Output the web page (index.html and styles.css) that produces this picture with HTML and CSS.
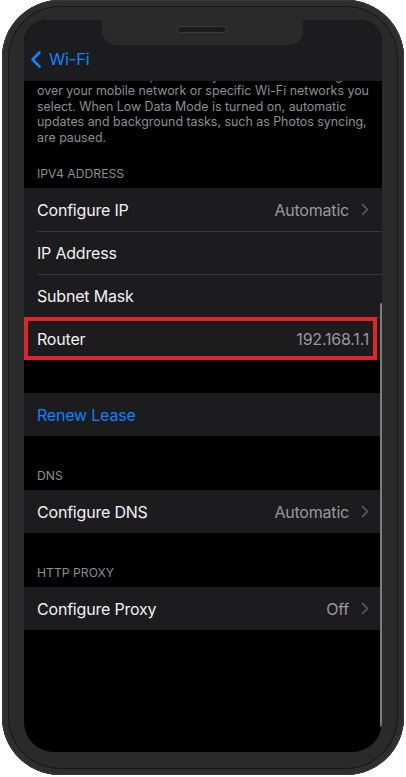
FILE: index.html
```html
<!DOCTYPE html>
<html lang="en">
<head>
  <meta charset="UTF-8" />
  <meta name="viewport" content="width=device-width, initial-scale=1.0" />
  <title>Wi-Fi Details</title>
  <link rel="stylesheet" href="styles.css">
</head>
<body>
  <div class="phone">
    <div class="screen">
      <div class="notch"><span class="speaker"></span></div>

      <!-- Navigation bar -->
      <header class="nav">
        <a class="back" href="#">
          <svg class="back-icon" width="12" height="17" viewBox="0 0 12 17"><path d="M9.5 1.5 L2.5 8.5 L9.5 15.5" /></svg>
          <span>Wi-Fi</span>
        </a>
      </header>

      <main class="content">
        <p class="footnote">Low Data Mode helps reduce your iPhone data usage<br>over your mobile network or specific Wi-Fi networks you<br>select. When Low Data Mode is turned on, automatic<br>updates and background tasks, such as Photos syncing,<br>are paused.</p>

        <h3 class="section-title">IPv4 Address</h3>
        <ul class="group">
          <li class="row">
            <div class="cell">
              <span class="label">Configure IP</span>
              <span class="value">Automatic</span>
              <svg class="chevron" width="8" height="13" viewBox="0 0 8 13"><path d="M1.5 1.5 L6.5 6.5 L1.5 11.5" /></svg>
            </div>
          </li>
          <li class="row">
            <div class="cell"><span class="label">IP Address</span></div>
          </li>
          <li class="row">
            <div class="cell"><span class="label">Subnet Mask</span></div>
          </li>
          <li class="row row-marked">
            <div class="cell">
              <span class="label">Router</span>
              <span class="value">192.168.1.1</span>
            </div>
          </li>
        </ul>

        <ul class="group group-spaced">
          <li class="row">
            <div class="cell"><span class="action">Renew Lease</span></div>
          </li>
        </ul>

        <h3 class="section-title section-spaced">DNS</h3>
        <ul class="group">
          <li class="row">
            <div class="cell">
              <span class="label">Configure DNS</span>
              <span class="value">Automatic</span>
              <svg class="chevron" width="8" height="13" viewBox="0 0 8 13"><path d="M1.5 1.5 L6.5 6.5 L1.5 11.5" /></svg>
            </div>
          </li>
        </ul>

        <h3 class="section-title section-spaced">HTTP Proxy</h3>
        <ul class="group">
          <li class="row">
            <div class="cell">
              <span class="label">Configure Proxy</span>
              <span class="value">Off</span>
              <svg class="chevron" width="8" height="13" viewBox="0 0 8 13"><path d="M1.5 1.5 L6.5 6.5 L1.5 11.5" /></svg>
            </div>
          </li>
        </ul>
      </main>

      <div class="scrollbar"></div>
    </div>
  </div>
</body>
</html>
```

FILE: styles.css
```css
body {
  margin: 0;
  background: #fff;
  font-family: 'Inter', 'Liberation Sans', sans-serif;
}

/* Device frame */
.phone {
  width: 402px;
  height: 775px;
  margin: 0 2px;
  padding: 20px 22px 23px;
  box-sizing: border-box;
  background: #2a2a2a;
  border-radius: 58px;
  box-shadow: inset 0 0 0 1px #3a3a3a, inset 0 0 0 6px #2e2e2e, inset 0 0 0 7px #181818;
}

.screen {
  position: relative;
  height: 100%;
  display: flex;
  flex-direction: column;
  background: #000;
  border-radius: 22px 22px 30px 30px;
  overflow: hidden;
}

.notch {
  position: absolute;
  top: 0;
  left: 78px;
  width: 201px;
  height: 25px;
  background: #2a2a2a;
  border-radius: 0 0 14px 14px;
  z-index: 2;
}

.speaker {
  position: absolute;
  top: 6px;
  left: 75px;
  width: 50px;
  height: 7px;
  box-sizing: border-box;
  background: #1b1b1b;
  border: 1px solid #3c3c3c;
  border-radius: 4px;
}

/* Nav bar */
.nav {
  height: 61px;
  flex-shrink: 0;
  display: flex;
  align-items: center;
  padding: 17px 0 0 6px;
  box-sizing: border-box;
  background: #1c1c1e;
}

.back {
  display: flex;
  align-items: center;
  color: #0a84ff;
  font-size: 16.5px;
  letter-spacing: -0.2px;
  text-decoration: none;
}

.back-icon {
  margin-right: 7px;
}

.back-icon path {
  fill: none;
  stroke: #0a84ff;
  stroke-width: 2.6;
  stroke-linecap: round;
  stroke-linejoin: round;
}

/* Scrolling content */
.content {
  flex: 1;
  overflow: hidden;
}

.footnote {
  margin: -13px 13px 0;
  font-size: 12.4px;
  line-height: 15.4px;
  color: #8e8e93;
}

.section-title {
  margin: 21px 0 0;
  padding: 0 13px 6px;
  font-size: 12.2px;
  font-weight: 400;
  line-height: 16px;
  text-transform: uppercase;
  color: #8e8e93;
}

.section-spaced {
  margin-top: 32px;
}

.group {
  list-style: none;
  margin: 0;
  padding: 0;
  background: #1c1c1e;
}

.group-spaced {
  margin-top: 33px;
}

.row {
  position: relative;
  height: 43px;
  padding-left: 13px;
  display: flex;
}

.cell {
  flex: 1;
  display: flex;
  align-items: center;
  padding-right: 13px;
  font-size: 16px;
  letter-spacing: -0.2px;
}

.row + .row .cell {
  border-top: 1px solid #38383a;
}

.label {
  flex: 1;
  color: #f2f2f7;
}

.value {
  color: #98989e;
}

.action {
  color: #0a84ff;
}

.chevron {
  margin-left: 12px;
}

.chevron path {
  fill: none;
  stroke: #5e5e63;
  stroke-width: 1.6;
  stroke-linecap: round;
  stroke-linejoin: round;
}

/* highlight box drawn over the Router row */
.row-marked::after {
  content: '';
  position: absolute;
  top: 0;
  left: 0;
  right: 5px;
  bottom: 0;
  border: 4px solid #e3232b;
}

.scrollbar {
  position: absolute;
  top: 283px;
  right: 0;
  width: 2.5px;
  height: 424px;
  background: #7c7c7c;
  border-radius: 2px;
}
```
